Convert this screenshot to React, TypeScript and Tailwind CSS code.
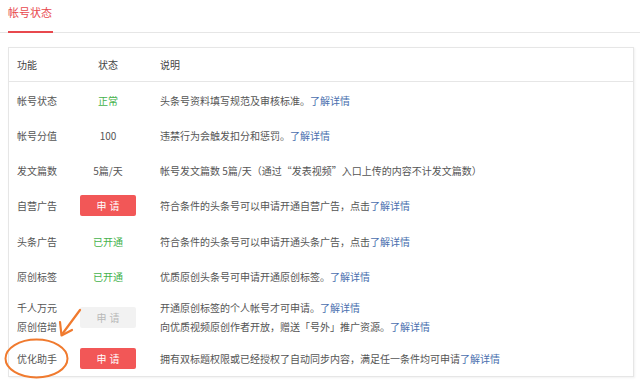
import React from "react";

const Link = () => <span className="text-[#4a6fae]">了解详情</span>;

type Row = {
  label: React.ReactNode;
  status: React.ReactNode;
  desc: React.ReactNode;
  h: string;
};

const Btn = ({ disabled }: { disabled?: boolean }) => (
  <div
    className={
      disabled
        ? "w-[56px] h-[21px] flex items-center justify-center bg-[#f2f2f2] text-[#b8b8b8] rounded-[2px]"
        : "w-[56px] h-[21px] flex items-center justify-center bg-[#f25757] text-white rounded-[2px]"
    }
  >
    <span className="tracking-[3px] pl-[3px]">申请</span>
  </div>
);

const green = (t: string) => <span className="text-[#45b24c]">{t}</span>;

const rows: Row[] = [
  { label: "帐号状态", status: green("正常"), desc: <>头条号资料填写规范及审核标准。<Link /></>, h: "h-[36px]" },
  { label: "帐号分值", status: "100", desc: <>违禁行为会触发扣分和惩罚。<Link /></>, h: "h-[35px]" },
  { label: "发文篇数", status: "5篇/天", desc: <>帐号发文篇数 5篇/天（通过“发表视频”入口上传的内容不计发文篇数）</>, h: "h-[35px]" },
  { label: "自营广告", status: <Btn />, desc: <>符合条件的头条号可以申请开通自营广告，点击<Link /></>, h: "h-[35px]" },
  { label: "头条广告", status: green("已开通"), desc: <>符合条件的头条号可以申请开通头条广告，点击<Link /></>, h: "h-[36px]" },
  { label: "原创标签", status: green("已开通"), desc: <>优质原创头条号可申请开通原创标签。<Link /></>, h: "h-[35px]" },
  {
    label: <div className="leading-[19px]"><div>千人万元</div><div>原创倍增</div></div>,
    status: <Btn disabled />,
    desc: (
      <div className="leading-[19px]">
        <div>开通原创标签的个人帐号才可申请。<Link /></div>
        <div>向优质视频原创作者开放，赠送「号外」推广资源。<Link /></div>
      </div>
    ),
    h: "h-[46px]",
  },
  { label: "优化助手", status: <Btn />, desc: <>拥有双标题权限或已经授权了自动同步内容，满足任一条件均可申请<Link /></>, h: "h-[36px]" },
];

export default function App() {
  return (
    <div
      className="w-[640px] h-[386px] bg-white text-[10px] text-[#555] relative overflow-hidden"
      style={{ fontFamily: '"Noto Sans CJK SC", "Noto Sans", sans-serif' }}
    >
      <div className="h-[33px] border-b border-[#e6e6e6] px-[8px] flex items-end">
        <div className="h-full flex flex-col justify-between w-[45px]">
          <div className="text-[11px] text-[#e8484d] pt-[4px] tracking-[0px]">帐号状态</div>
          <div className="h-[2px] bg-[#e8484d] mb-[-1px]" />
        </div>
      </div>
      <div className="mt-[14px] ml-[8px] w-[626px] border border-[#e6e6e6] shadow-[1px_1px_2px_rgba(0,0,0,0.06)]">
        <div className="h-[34px] flex items-center pl-[8px] border-b border-[#e6e6e6] text-[#444]">
          <div className="w-[63px]">功能</div>
          <div className="w-[56px] text-center">状态</div>
          <div className="ml-[24px]">说明</div>
        </div>
        {rows.map((r, i) => (
          <div key={i} className={`flex items-center pl-[8px] ${r.h}`}>
            <div className="w-[63px]">{r.label}</div>
            <div className="w-[56px] flex justify-center text-center">{r.status}</div>
            <div className="ml-[24px]">{r.desc}</div>
          </div>
        ))}
      </div>
      <svg className="absolute left-0 top-0 pointer-events-none" width="640" height="386">
        <ellipse cx="36.5" cy="358.5" rx="31" ry="19" fill="none" stroke="#f07a2e" strokeWidth="2" />
        <line x1="80" y1="310" x2="63" y2="333" stroke="#f07a2e" strokeWidth="2.2" strokeLinecap="round" />
        <path d="M60 322 L61.5 335.5 L72 330" fill="none" stroke="#f07a2e" strokeWidth="2.2" strokeLinecap="round" strokeLinejoin="round" />
      </svg>
    </div>
  );
}
